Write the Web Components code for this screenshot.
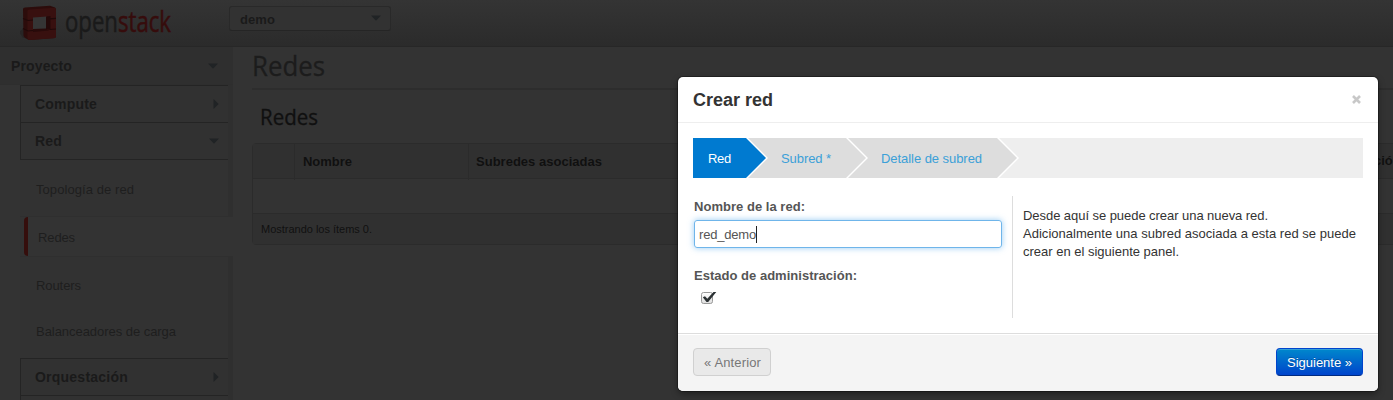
<!DOCTYPE html>
<html lang="es">
<head>
<meta charset="utf-8">
<title>Redes</title>
<style>
html,body{margin:0;height:400px;overflow:hidden;background:#333}
body{font:13px/18px "Liberation Sans",Arial,sans-serif;color:#1a1a1a}
</style>
</head>
<body>
<dash-app></dash-app>
<script>
const define = (name, html, init) => customElements.define(name, class extends HTMLElement {
  connectedCallback() {
    if (this.shadowRoot) return;
    const t = document.createElement('template');
    t.innerHTML = html;
    this.attachShadow({mode: 'open'}).append(t.content.cloneNode(true));
    if (init) init(this, this.shadowRoot);
  }
});

/* Text run tracked (or condensed, with "condense") to a given width. */
define('fit-text', `<style>:host{display:inline-block;white-space:nowrap}span{display:inline-block;transform-origin:0 50%}</style><span><slot></slot></span>`, (el, root) => {
  const s = root.querySelector('span'), w = +el.getAttribute('w');
  const nat = s.getBoundingClientRect().width;
  if (!w || !nat) return;
  if (el.hasAttribute('condense')) { s.style.transform = `scaleX(${w / nat})`; el.style.width = w + 'px'; }
  else s.style.letterSpacing = ((w - nat) / el.textContent.length) + 'px';
});

define('caret-icon', `<style>:host{display:block;width:12px;height:12px}:host([right]) svg{transform:rotate(-90deg)}svg{display:block}</style>
<svg width="12" height="12"><path d="M1 3.5H11L6 8.7Z" fill="#202325"/></svg>`);

define('stack-logo', `<style>:host{display:flex;width:152px;height:42px}svg{display:block;flex:none}
fit-text{font:29px/34px "Open Sans",sans-serif;margin:4px 0 0 4px;-webkit-text-stroke:.5px}b{font-weight:400;color:#360c0c}</style>
<svg width="41" height="42" viewBox="0 0 41 42"><path d="M-1 32L5 27V38L3 38Z" fill="#272525"/>
<path d="M3 9Q3 7.500 5 7.500L30 5.800L35 7.500L36 9V36Q36 38 34 38L9 40L5 38L3.500 36Z" fill="#2c0c0b"/>
<path d="M7.500 11Q7.500 9.500 9 9.500L34.500 7.800Q36 8 36 10V36.500Q36 38 34 38.200L9.500 40Q7.500 40 7.500 38Z" fill="#38100f"/>
<path d="M13 17.500L27 16.500V29L13 30Z" fill="#353535"/><path d="M26 16.500L30.500 16V30L26 29Z" fill="#240909"/><path d="M13 29L26 28.500L29 30.500L13 32Z" fill="#280a0a"/>
<path d="M3 18.500L8 20.500L13 20M30 18.800L36 18.300M3 28.500L8 31L13 30.500M30 29.500L36 29" stroke="#200909" stroke-width="1.200" fill="none"/></svg>
<fit-text w="106" condense>open<b>stack</b></fit-text>`);

define('top-bar', `<style>:host{display:flex;box-sizing:border-box;height:47px;background:linear-gradient(#343434,#2b2b2b);border-bottom:1px solid #272727}
stack-logo{margin-left:20px}
.sel{box-sizing:border-box;margin:6px 0 0 57px;width:162px;height:25px;border:1px solid #292929;border-bottom-color:#252525;border-radius:3px;background:#323232;display:flex;align-items:center;padding:2px 8px 0 10px;justify-content:space-between;font-weight:700}caret-icon{margin-top:-3px}</style>
<stack-logo></stack-logo><div class="sel"><fit-text w="35">demo</fit-text><caret-icon></caret-icon></div>`);

define('nav-head', `<style>:host{display:flex;box-sizing:border-box;align-items:center;justify-content:space-between;height:37px;margin-left:20px;padding:0 6px 0 14px;border:1px solid #242424;border-width:1px 0 0 1px;background:#313131;font-size:14px;font-weight:700}</style>
<slot></slot>`);

define('nav-link', `<style>:host{display:flex;box-sizing:border-box;align-items:center;height:46px;padding-left:36px;color:#1e1e1e}
:host([on]){height:39px;margin:0 -5px 0 24px;padding:3px 0 0 10px;border-left:4px solid #350e0c;border-radius:4px 0 0 4px;background:#333}</style><slot></slot>`);

define('side-nav', `<style>:host{display:block;flex:none;box-sizing:border-box;width:233px;height:353px;overflow:hidden}
.top{display:flex;box-sizing:border-box;height:38px;padding:0 14px 0 11px;align-items:center;justify-content:space-between;background:#2f2f2f;font-size:14px;font-weight:700;border-bottom:1px solid #2e2e2e}
.menu{box-sizing:border-box;border-right:5px solid #2f2f2f;height:315px;background:linear-gradient(90deg,#333 20px,#323232 20px)}
.links{border-top:1px solid #242424;margin-left:20px}
.links nav-link:not([on]){padding-left:16px}.links nav-link[on]{margin-left:4px}
.a{height:57px;padding-top:3px;border-bottom:1px solid #2f2f2f}.b{height:52px;padding-top:7px;border-top:1px solid #2f2f2f}.c{height:50px;padding-bottom:3px}
nav-link{box-sizing:border-box}
</style>
<div class="top"><fit-text w="61">Proyecto</fit-text><caret-icon></caret-icon></div>
<div class="menu">
<nav-head><fit-text w="62">Compute</fit-text><caret-icon right></caret-icon></nav-head>
<nav-head><fit-text w="27">Red</fit-text><caret-icon style="margin-right:2px"></caret-icon></nav-head>
<div class="links"><nav-link class="a"><fit-text w="98">Topología de red</fit-text></nav-link>
<nav-link on><fit-text w="37">Redes</fit-text></nav-link>
<nav-link class="b"><fit-text w="45">Routers</fit-text></nav-link>
<nav-link class="c"><fit-text w="140">Balanceadores de carga</fit-text></nav-link></div>
<nav-head><fit-text w="93">Orquestación</fit-text><caret-icon right></caret-icon></nav-head>
<nav-head></nav-head>
</div>`);

define('net-table', `<style>:host{display:block;box-sizing:border-box;border:1px solid #2b2b2b;border-radius:4px;color:#101010}
.h{display:grid;grid-template-columns:41px 174px 1fr;height:34px;background:#303030;border-bottom:1px solid #2b2b2b;font-weight:700;line-height:36px}
.h div{border-left:1px solid #2b2b2b;padding-left:8px}.h div:first-child{border:0}.h div:last-child{padding-left:7px}
.r{height:34px;border-bottom:1px solid #2b2b2b}.f{height:30px;background:#303030;padding-left:8px;font-size:11px;line-height:31px}</style>
<div class="h"><div></div><div><fit-text w="49">Nombre</fit-text></div><div><fit-text w="126">Subredes asociadas</fit-text></div></div>
<div class="r"></div><div class="f"><fit-text w="111">Mostrando los ítems 0.</fit-text></div>`);

define('main-view', `<style>:host{display:block;flex:1;padding-left:19px;overflow:hidden}
h1,h2{margin:0;font-family:"Open Sans",sans-serif;font-weight:400;-webkit-text-stroke:.3px}
h1{font-size:28px;line-height:36px;height:41px;border-bottom:2px solid #2d2d2d;color:#1c1c1c}
h2{font-size:22px;line-height:52px;height:53px;padding-left:8px;color:#101010}</style>
<h1><fit-text w="73" condense>Redes</fit-text></h1><h2><fit-text w="58" condense>Redes</fit-text></h2><net-table></net-table>`);

define('wizard-step', `<style>:host{display:block;position:relative;box-sizing:border-box;height:40px;line-height:41px;background:var(--c);--c:#ddd;color:#3ba0d8;padding-left:34px}
:host([active]){--c:#007ad0;color:#fff;padding-left:15px}
:host::before,:host::after{content:"";position:absolute;left:100%;top:0;width:22px;height:40px;background:#fff;clip-path:polygon(0 0,2px 0,100% 50%,2px 100%,0 100%)}
:host::after{width:20px;background:var(--c);clip-path:polygon(0 0,100% 50%,0 100%)}</style><slot></slot>`);

define('wizard-steps', `<style>:host{display:flex;height:40px;background:#eee;overflow:hidden}
wizard-step:nth-child(2){width:53px;z-index:3}wizard-step:nth-child(3){width:100px;z-index:2;padding-left:35px}wizard-step:nth-child(4){width:151px;z-index:1;padding-left:35px}</style>
<wizard-step active><fit-text w="23">Red</fit-text></wizard-step><wizard-step><fit-text w="50">Subred *</fit-text></wizard-step><wizard-step><fit-text w="101">Detalle de subred</fit-text></wizard-step>`);

define('check-box', `<style>:host{display:block;width:17px;height:15px}svg{display:block}</style>
<svg width="17" height="15"><defs><linearGradient id="g" x2="0" y2="1"><stop stop-color="#fff"/><stop offset="1" stop-color="#ddd"/></linearGradient></defs><rect x=".5" y="2.500" width="11" height="11" rx="2" fill="url(#g)" stroke="#999"/><path d="M1.800 7.200L4 6.200L6.300 8.800L12.500 2H15.300L7.200 12H5.500Z" fill="#2b3133"/></svg>`);

define('push-button', `<style>:host{display:block;box-sizing:border-box;height:28px;border:1px solid #d0d0d0;border-radius:4px;background:#e9e9e9;color:#777;padding:0 10px;line-height:28px;text-align:center}
:host([primary]){color:#fff;border-color:#0044cc #0044cc #002a80;background:linear-gradient(#0088cc,#0044cc);box-shadow:inset 0 1px 0 rgba(255,255,255,.2);text-shadow:0 -1px 0 rgba(0,0,0,.25)}</style><slot></slot>`);

define('create-dialog', `<style>:host{display:block;box-sizing:border-box;width:700px;height:314px;border-radius:5px;background:#fff;overflow:hidden;box-shadow:0 0 0 1px rgba(0,0,0,.3),0 3px 7px rgba(0,0,0,.4);color:#333}
header{display:flex;justify-content:space-between;box-sizing:border-box;height:46px;border-bottom:1px solid #eee;padding:0 17px 0 15px;line-height:46px}
h3{margin:0;font-size:18px}
header svg{margin-top:18px}
.body{padding:15px 15px 0;height:195px}
.cols{display:flex;margin-top:18px;height:122px}
.form{box-sizing:border-box;width:320px;padding:2px 0 0 1px;border-right:1px solid #ddd;color:#555}
label{display:block;font-weight:700;height:22px}
.in{box-sizing:border-box;width:308px;height:28px;border:1px solid #6fb5ea;border-radius:3px;box-shadow:0 0 6px rgba(82,168,236,.6);padding:1px 0 0 4px;display:flex;align-items:center;margin-bottom:19px}
i{width:1px;height:17px;background:#222}
check-box{margin:1px 0 0 7px}
p{margin:11px 0 0 10px}p fit-text{display:block}
footer{box-sizing:border-box;height:58px;border-top:1px solid #ddd;box-shadow:inset 0 1px #fff;background:#f4f4f4;padding:14px 15px;display:flex;justify-content:space-between}
.p{width:78px}.n{width:87px}</style>
<header><h3><fit-text w="80">Crear red</fit-text></h3><svg width="9" height="9"><path d="M1 1L8 8M8 1L1 8" stroke="#c8c8c8" stroke-width="2.600"/></svg></header>
<div class="body"><wizard-steps></wizard-steps>
<div class="cols"><div class="form"><label><fit-text w="111">Nombre de la red:</fit-text></label><div class="in"><fit-text w="57">red_demo</fit-text><i></i></div>
<label><fit-text w="163">Estado de administración:</fit-text></label><check-box></check-box></div>
<p><fit-text w="245">Desde aquí se puede crear una nueva red.</fit-text><fit-text w="333">Adicionalmente una subred asociada a esta red se puede</fit-text><fit-text w="156">crear en el siguiente panel.</fit-text></p></div></div>
<footer><push-button class="p"><fit-text w="57">« Anterior</fit-text></push-button><push-button primary class="n"><fit-text w="65">Siguiente »</fit-text></push-button></footer>`);

define('dash-app', `<style>:host{display:block;position:relative;width:1393px;height:400px;overflow:hidden;background:#333}
.row{display:flex;width:1412px}create-dialog{position:absolute;left:678px;top:77px}
.col{position:absolute;left:1374px;top:152px;font-weight:700;color:#101010}</style>
<top-bar></top-bar><div class="row"><side-nav></side-nav><main-view></main-view></div><div class="col">ció</div><create-dialog></create-dialog>`);
</script>
</body>
</html>
